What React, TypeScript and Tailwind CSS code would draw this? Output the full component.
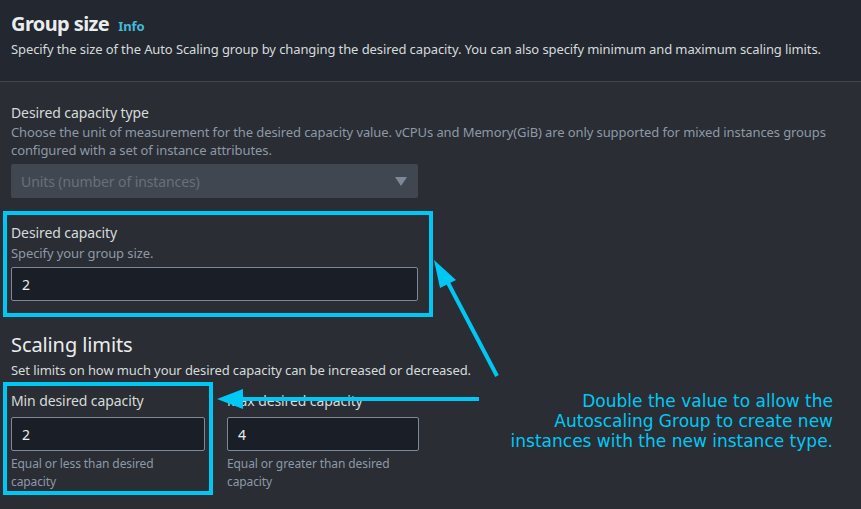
import React from 'react';

const App = () => {
  return (
    <div
      className="relative w-[861px] h-[509px] overflow-hidden bg-[#2a2d33] tracking-[-0.1px]"
      style={{ fontFamily: '"Noto Sans", "Open Sans", sans-serif' }}
    >
      {/* Header */}
      <div className="bg-[#232730] border-b border-[#414750] px-[11px] pt-[10px] h-[82px]">
        <div className="flex items-baseline gap-[9px]">
          <h2 className="text-[20px] leading-[28px] font-bold tracking-[-0.6px] text-[#eaeded]">Group size</h2>
          <span className="text-[13px] font-bold text-[#44b9d6]">Info</span>
        </div>
        <p className="mt-[2px] text-[13px] leading-[18px] text-[#d5dbdb]">
          Specify the size of the Auto Scaling group by changing the desired capacity. You can also specify minimum and
          maximum scaling limits.
        </p>
      </div>

      {/* Body */}
      <div className="px-[11px] pt-[21px] w-[430px]">
        <div className="text-[14px] leading-[20px] text-[#d5dbdb]">Desired capacity type</div>
        <p className="w-[820px] text-[13px] leading-[18px] text-[#8d99a8]">
          Choose the unit of measurement for the desired capacity value. vCPUs and Memory(GiB) are only supported for mixed
          instances groups configured with a set of instance attributes.
        </p>
        <div className="mt-[5px] w-[407px] h-[34px] rounded-[2px] bg-[#414750] px-[10px] flex items-center justify-between text-[14px] text-[#687078]">
          <span>Units (number of instances)</span>
          <svg width="12" height="9" viewBox="0 0 12 9" className="mr-[1px]">
            <path d="M0 0h12L6 9z" fill="#7d8998" />
          </svg>
        </div>

        {/* Desired capacity, highlighted */}
        <div className="-ml-[8px] mt-[13px] w-[430px] border-[4px] border-[#00c8f4] pl-[4px] pt-[8px] pb-[12px]">
          <div className="w-[407px] flex flex-col">
            <span className="text-[14px] leading-[20px] text-[#d5dbdb]">Desired capacity</span>
            <span className="mt-[1px] text-[13px] leading-[18px] text-[#8d99a8]">Specify your group size.</span>
            <div className="mt-[5px] h-[34px] rounded-[2px] border border-[#7d8998] bg-[#1a1f27] px-[10px] flex items-center text-[14px] text-[#eaeded]">
              2
            </div>
          </div>
        </div>

        <div className="mt-[15px] text-[20px] leading-[26px] text-[#eaeded]">Scaling limits</div>
        <p className="mt-[3px] w-[600px] text-[13px] leading-[18px] text-[#d5dbdb]">
          Set limits on how much your desired capacity can be increased or decreased.
        </p>

        <div className="mt-[3px] flex gap-[14px]">
          <div className="-ml-[8px] w-[210px] border-[4px] border-[#00c8f4] px-[4px] pt-[5px]">
            <div className="text-[14px] leading-[20px] text-[#d5dbdb]">Min desired capacity</div>
            <div className="mt-[6px] h-[34px] rounded-[2px] border border-[#7d8998] bg-[#1a1f27] px-[10px] flex items-center text-[14px] text-[#eaeded]">
              2
            </div>
            <p className="mt-[4px] max-w-[165px] text-[12px] leading-[18px] text-[#8d99a8]">
              Equal or less than desired capacity
            </p>
          </div>
          <div className="w-[192px] pt-[9px]">
            <div className="text-[14px] leading-[20px] text-[#d5dbdb]">Max desired capacity</div>
            <div className="mt-[6px] h-[34px] rounded-[2px] border border-[#7d8998] bg-[#1a1f27] px-[10px] flex items-center text-[14px] text-[#eaeded]">
              4
            </div>
            <p className="mt-[4px] text-[12px] leading-[18px] text-[#8d99a8]">Equal or greater than desired capacity</p>
          </div>
        </div>
      </div>

      {/* Annotation arrows */}
      <svg className="absolute left-0 top-0" width="861" height="509" viewBox="0 0 861 509">
        <line x1="497" y1="376" x2="446" y2="279" stroke="#00c8f4" strokeWidth="4" />
        <path d="M434 260 L456 280 L440 288 Z" fill="#00c8f4" />
        <line x1="479" y1="399" x2="238" y2="399" stroke="#00c8f4" strokeWidth="4" />
        <path d="M217 399 L243 389 L243 409 Z" fill="#00c8f4" />
      </svg>

      {/* Annotation note */}
      <div
        className="absolute right-[28px] top-[391px] text-right text-[17px] leading-[20px] tracking-normal text-[#00c8f4]"
        style={{ fontFamily: '"DejaVu Sans", sans-serif' }}
      >
        Double the value to allow the
        <br />
        Autoscaling Group to create new
        <br />
        instances with the new instance type.
      </div>
    </div>
  );
};

export default App;
